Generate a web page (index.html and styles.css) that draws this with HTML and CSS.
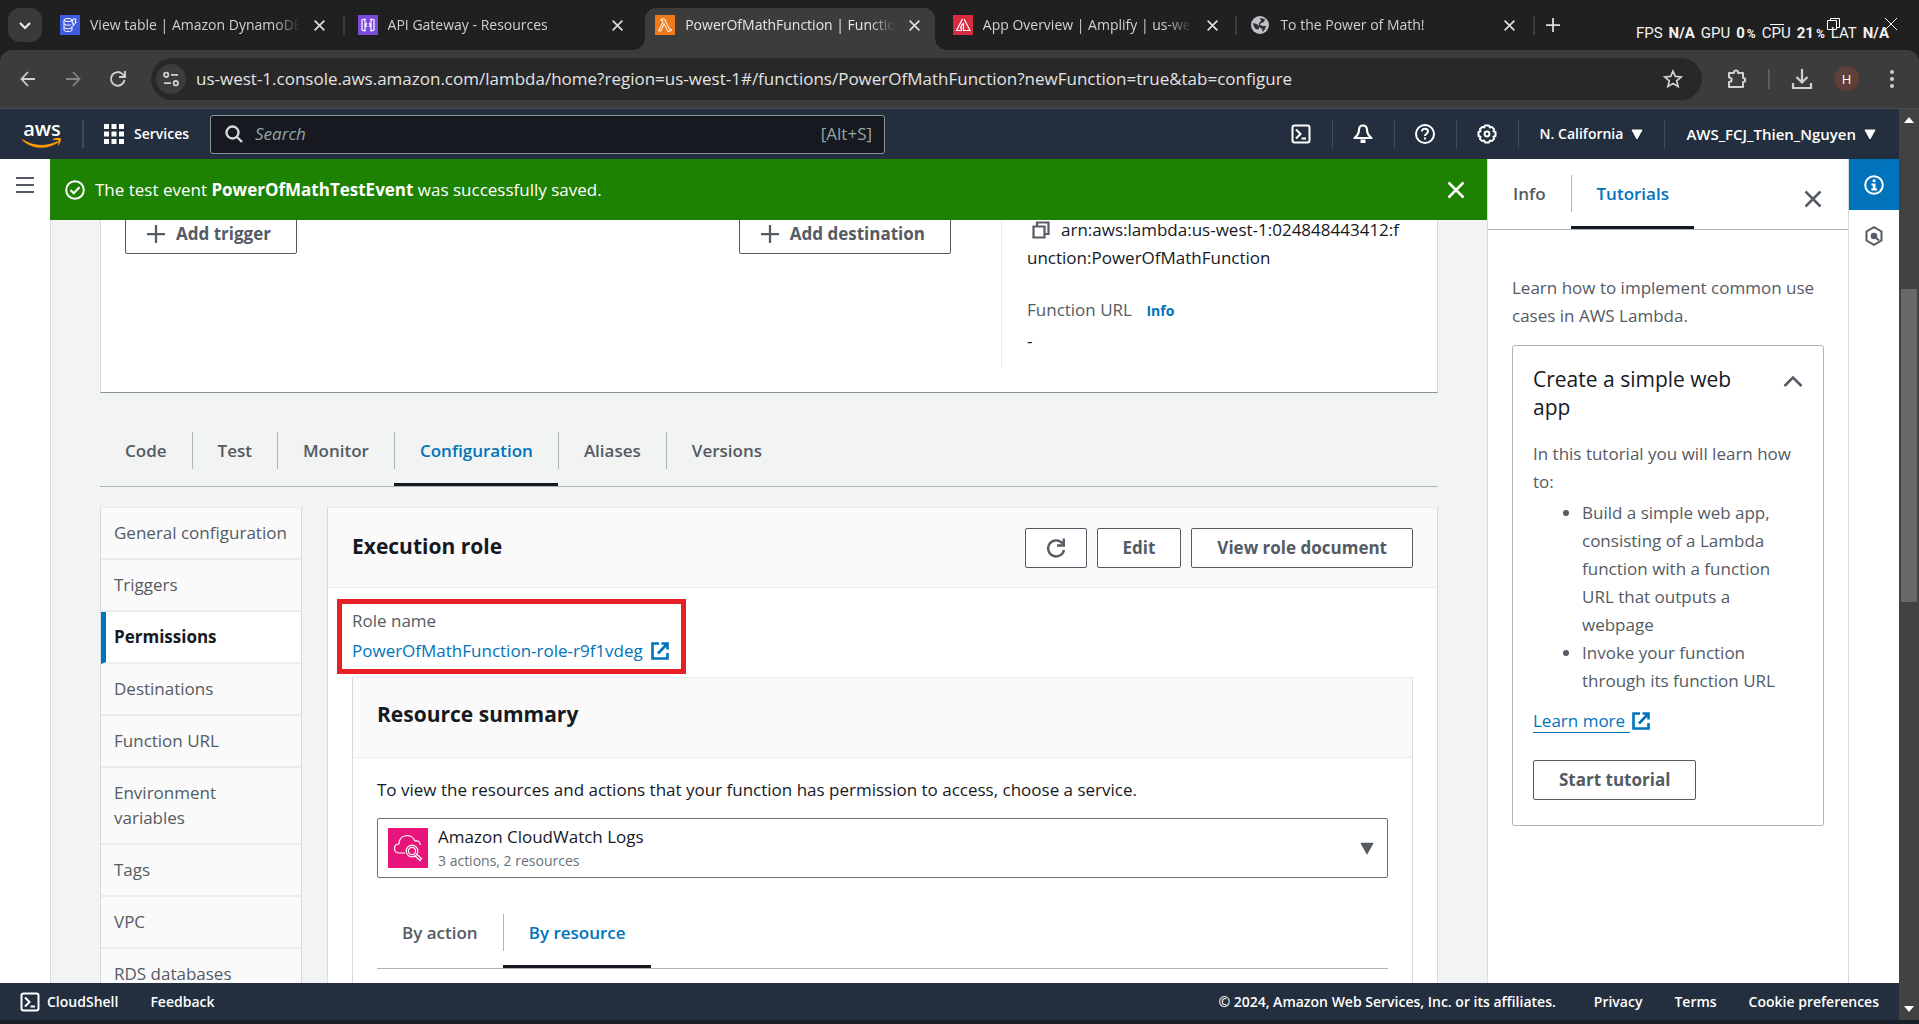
FILE: index.html
```html
<!DOCTYPE html>
<html lang="en">
<head>
<meta charset="utf-8">
<title>PowerOfMathFunction | Functions | Lambda</title>
<link rel="stylesheet" href="styles.css">
</head>
<body>
<svg class="sprite" aria-hidden="true">
  <symbol id="x" viewBox="0 0 16 16"><path d="M2 2l12 12M14 2L2 14" fill="none" stroke="currentColor" stroke-width="2"/></symbol>
  <symbol id="plus" viewBox="0 0 16 16"><path d="M8 0v16M0 8h16" fill="none" stroke="currentColor" stroke-width="2"/></symbol>
  <symbol id="caret" viewBox="0 0 12 12"><path d="M1 2h10L6 11z" fill="currentColor" stroke="currentColor" stroke-linejoin="round"/></symbol>
  <symbol id="shell" viewBox="0 0 20 20"><rect x="1.500" y="1.500" width="17" height="17" rx="2" fill="none" stroke="currentColor" stroke-width="2"/><path d="M5 5.500l4.500 4.500L5 14.500M10.500 14.500H15" fill="none" stroke="currentColor" stroke-width="2"/></symbol>
  <symbol id="external" viewBox="0 0 18 18"><path d="M8 1.500H1.500v15h15V11M10.500 1.500h6v6M16 2L7 11.500" fill="none" stroke="currentColor" stroke-width="2.600"/></symbol>
</svg>

<header class="tabstrip">
  <button class="tab-search" aria-label="Search tabs"><svg width="12" height="12" viewBox="0 0 12 12"><path d="M1 4l5 5 5-5" fill="none" stroke="currentColor" stroke-width="2.200"/></svg></button>
  <div class="btabs">
    <div class="btab">
      <svg width="20" height="20" viewBox="0 0 20 20"><rect width="20" height="20" fill="#3f5be0"/><g fill="none" stroke="#fff"><ellipse cx="8" cy="5" rx="4" ry="1.500"/><path d="M4 5v10c0 2 8 2 8 0v-4M12 5v2M4 8.500c0 2 6 2 7 1M4 12c0 2 6 2 8 1M13 4h3l-1 3h1.500L13 11l.5-3H12z"/></g></svg>
      <span class="btab-title">View table | Amazon DynamoDB</span>
      <button aria-label="Close tab"><svg width="13" height="13"><use href="#x"/></svg></button>
    </div>
    <div class="btab">
      <svg width="20" height="20" viewBox="0 0 20 20"><rect width="20" height="20" fill="#7c4bdb"/><path d="M7 4L4 5v10l3 1zM13 4l3 1v10l-3 1zM9 8l-1.500 2L9 12M11 8l1.500 2-1.500 2" fill="none" stroke="#fff" stroke-width="1.200"/></svg>
      <span class="btab-title">API Gateway - Resources</span>
      <button aria-label="Close tab"><svg width="13" height="13"><use href="#x"/></svg></button>
    </div>
    <div class="btab active">
      <svg width="20" height="20" viewBox="0 0 20 20"><rect width="20" height="20" fill="#ee7a1a"/><path d="M6 4h3.500l5 10.500 1.500-.5.500 1.500-3.500 1.200L9 8.500 6 16H3.500L8 7l-.700-1.500H6z" fill="none" stroke="#fff"/></svg>
      <span class="btab-title">PowerOfMathFunction | Functions</span>
      <button aria-label="Close tab"><svg width="13" height="13"><use href="#x"/></svg></button>
    </div>
    <div class="btab">
      <svg width="20" height="20" viewBox="0 0 20 20"><rect width="20" height="20" fill="#d92b3f"/><path d="M9.500 4L3.500 15.500h5V13H7.500l2-4.500M11 4l6 11.500H10.500V8" fill="none" stroke="#fff" stroke-width="1.200"/></svg>
      <span class="btab-title">App Overview | Amplify | us-west-1</span>
      <button aria-label="Close tab"><svg width="13" height="13"><use href="#x"/></svg></button>
    </div>
    <div class="btab">
      <svg width="20" height="20" viewBox="0 0 20 20"><circle cx="10" cy="10" r="9" fill="#bdc1c6"/><path d="M3 8l4 1 2 2v3l-2 .5C5 14 3 11 3 8zM10 3l5 1-1 3-3 1-1 2 3 1h3l-1 3-2 3-1-3-3-2V8l2-2z" fill="#303134"/></svg>
      <span class="btab-title">To the Power of Math!</span>
      <button aria-label="Close tab"><svg width="13" height="13"><use href="#x"/></svg></button>
    </div>
  </div>
  <button class="new-tab" aria-label="New tab"><svg width="14" height="14"><use href="#plus"/></svg></button>
  <div class="win">
    <button aria-label="Minimize"><svg width="14" height="14" viewBox="0 0 14 14"><path d="M0 7.500h14" stroke="currentColor"/></svg></button>
    <button aria-label="Restore"><svg width="14" height="14" viewBox="0 0 14 14"><path d="M.5 3.500h9v9h-9zM3.500 3V1.500h9v9H10" fill="none" stroke="currentColor"/></svg></button>
    <button aria-label="Close"><svg width="14" height="14" viewBox="0 0 14 14"><path d="M1 1l12 12M13 1L1 13" stroke="currentColor"/></svg></button>
  </div>
  <p class="stats"><span>FPS</span><b>N/A</b><span>GPU</span><b>0<small>%</small></b><span>CPU</span><b>21<small>%</small></b><span>LAT</span><b>N/A</b></p>
</header>

<div class="toolbar">
  <button aria-label="Back"><svg width="16" height="16" viewBox="0 0 16 16"><path d="M15 8H2M8 1L1.500 8 8 15" fill="none" stroke="currentColor" stroke-width="1.800"/></svg></button>
  <button class="dim" aria-label="Forward"><svg width="16" height="16" viewBox="0 0 16 16"><path d="M1 8h13M8 1l6.500 7L8 15" fill="none" stroke="currentColor" stroke-width="1.800"/></svg></button>
  <button aria-label="Reload"><svg width="18" height="18" viewBox="0 0 18 18"><path d="M15.500 10A6.800 6.800 0 1 1 14 4.500L15 6M16 1v6h-6" fill="none" stroke="currentColor" stroke-width="1.900"/></svg></button>
  <div class="omnibox">
    <button class="site" aria-label="Site information"><svg width="16" height="16" viewBox="0 0 16 16"><g fill="none" stroke="currentColor" stroke-width="1.800"><circle cx="3.200" cy="3.800" r="2.200"/><path d="M8 3.800h7M1 12.200h7"/><circle cx="12.800" cy="12.200" r="2.200"/></g></svg></button>
    <input aria-label="Address" value="us-west-1.console.aws.amazon.com/lambda/home?region=us-west-1#/functions/PowerOfMathFunction?newFunction=true&amp;tab=configure">
    <button class="star" aria-label="Bookmark"><svg width="20" height="20" viewBox="0 0 20 20"><path d="M10 2l2.300 5.400 5.900.5-4.500 3.900 1.400 5.700L10 14.400l-5.100 3.100 1.400-5.700L1.800 7.900l5.900-.5z" fill="none" stroke="currentColor" stroke-width="1.700"/></svg></button>
  </div>
  <div class="tools">
    <button aria-label="Extensions"><svg width="22" height="22" viewBox="0 0 22 22"><path d="M3 5h5c-.5-3.500 4.500-3.500 4 0h5v5c3 0 3 4 0 4v5H3v-5c3.500 0 3.500-4.500 0-4.500z" fill="none" stroke="currentColor" stroke-width="2" stroke-linejoin="round"/></svg></button>
    <i></i>
    <button aria-label="Downloads"><svg width="22" height="22" viewBox="0 0 22 22"><path d="M11 1v13M5.500 9l5.500 5.500L16.500 9M2 15v5h18v-5" fill="none" stroke="currentColor" stroke-width="2.200"/></svg></button>
    <button class="avatar" aria-label="Profile">H</button>
    <button aria-label="Menu"><svg width="6" height="20" viewBox="0 0 6 20"><g fill="currentColor"><circle cx="3" cy="3" r="2"/><circle cx="3" cy="10" r="2"/><circle cx="3" cy="17" r="2"/></g></svg></button>
  </div>
</div>

<div class="viewport">
  <div class="console">
    <nav class="awsnav">
      <a class="logo" href="#" aria-label="AWS home"><span>aws</span><svg width="40" height="12" viewBox="0 0 40 12"><path d="M0 1c11 7 23 8 36 2l1 1C26 12 10 12 0 2z" fill="#f90"/><path d="M31 1c4-1.500 8-1.500 8 0s-1 5-3 7c0-2 1-4 .5-5.500-1-.8-3.500-.5-5.500-.5z" fill="#f90"/></svg></a>
      <a class="services" href="#"><svg width="20" height="20" viewBox="0 0 20 20" fill="currentColor"><path d="M0 0h5v5H0zM7.500 0h5v5h-5zM15 0h5v5h-5zM0 7.500h5v5H0zM7.500 7.500h5v5h-5zM15 7.500h5v5h-5zM0 15h5v5H0zM7.500 15h5v5h-5zM15 15h5v5h-5z"/></svg>Services</a>
      <label class="search"><svg width="18" height="18" viewBox="0 0 18 18"><g fill="none" stroke="currentColor" stroke-width="2.400"><circle cx="7.500" cy="7.500" r="6"/><path d="M12 12l5 5"/></g></svg><input type="search" placeholder="Search" aria-label="Search"><span>[Alt+S]</span></label>
      <div class="navicons">
        <button aria-label="CloudShell"><svg width="20" height="20"><use href="#shell"/></svg></button>
        <button aria-label="Notifications"><svg width="20" height="20" viewBox="0 0 20 20"><path d="M10 1.500c-2.500 0-4 2-4 4.500 0 3.500-1.500 5.500-4.500 8h17c-3-2.500-4.500-4.500-4.500-8 0-2.500-1.500-4.500-4-4.500z" fill="none" stroke="currentColor" stroke-width="2.200" stroke-linejoin="round"/><path d="M7.500 15.500v3.500h5v-3.500" fill="currentColor"/></svg></button>
        <button aria-label="Help"><svg width="20" height="20" viewBox="0 0 20 20"><g fill="none" stroke="currentColor" stroke-width="2"><circle cx="10" cy="10" r="9"/><path d="M7 7.500c0-4 6-3.500 6 0 0 2-3 2.500-3 4.500M10 13.500v2"/></g></svg></button>
        <button aria-label="Settings"><svg width="20" height="20" viewBox="0 0 20 20"><path d="M8 1.500h4l.8 2 2-.6 2.300 2.300-.6 2 2 .8v4l-2 .8.6 2-2.300 2.300-2-.6-.8 2H8l-.8-2-2 .6-2.300-2.300.6-2-2-.8V8l2-.8-.6-2 2.300-2.300 2 .6z" fill="none" stroke="currentColor" stroke-width="2" stroke-linejoin="round"/><circle cx="10" cy="10" r="2.400" fill="none" stroke="currentColor" stroke-width="2"/></svg></button>
        <button class="menu">N. California <svg width="12" height="12"><use href="#caret"/></svg></button>
        <button class="menu account">AWS_FCJ_Thien_Nguyen <svg width="12" height="12"><use href="#caret"/></svg></button>
      </div>
    </nav>

    <div class="workspace">
      <aside class="rail"><button aria-label="Open navigation"><svg width="18" height="16" viewBox="0 0 18 16"><path d="M0 1h18M0 8h18M0 15h18" stroke="currentColor" stroke-width="2"/></svg></button></aside>

      <main class="main">
        <div class="flash" role="status">
          <svg width="20" height="20" viewBox="0 0 20 20"><g fill="none" stroke="currentColor" stroke-width="2"><circle cx="10" cy="10" r="8.800"/><path d="M5.500 10l3.200 3.200 5.800-6"/></g></svg>
          <p>The test event <b>PowerOfMathTestEvent</b> was successfully saved.</p>
          <button aria-label="Dismiss"><svg width="20" height="20"><use href="#x"/></svg></button>
        </div>

        <div class="scroller">
          <section class="card overview">
            <div class="designer">
              <button class="btn"><svg width="18" height="18"><use href="#plus"/></svg>Add trigger</button>
              <button class="btn"><svg width="18" height="18"><use href="#plus"/></svg>Add destination</button>
            </div>
            <dl class="facts">
              <dd class="arn"><svg width="18" height="18" viewBox="0 0 18 18"><path d="M1.500 5.500h11v11h-11zM5 5V1.500h11.500V13H13" fill="none" stroke="#545b64" stroke-width="2.200"/></svg>arn:aws:lambda:us-west-1:024848443412:f<wbr>unction:PowerOfMathFunction</dd>
              <dt>Function URL <a href="#">Info</a></dt>
              <dd>-</dd>
            </dl>
          </section>

          <div class="tabs" role="tablist">
            <button role="tab"><span>Code</span></button><button role="tab"><span>Test</span></button><button role="tab"><span>Monitor</span></button><button role="tab" aria-selected="true"><span>Configuration</span></button><button role="tab"><span>Aliases</span></button><button role="tab"><span>Versions</span></button>
          </div>

          <div class="config">
            <nav class="sidebar">
              <a href="#">General configuration</a>
              <a href="#">Triggers</a>
              <a href="#" class="current">Permissions</a>
              <a href="#">Destinations</a>
              <a href="#">Function URL</a>
              <a href="#">Environment<br>variables</a>
              <a href="#">Tags</a>
              <a href="#">VPC</a>
              <a href="#">RDS databases</a>
            </nav>
            <section class="card role">
              <header>
                <h2>Execution role</h2>
                <button class="btn icon" aria-label="Refresh"><svg width="20" height="20" viewBox="0 0 20 20"><path d="M18 12A8 8 0 1 1 16.500 5.500M17.800 .5v7H11" fill="none" stroke="currentColor" stroke-width="2.400"/></svg></button>
                <button class="btn">Edit</button>
                <button class="btn">View role document</button>
              </header>
              <div class="role-body">
                <div class="field">
                  <div>Role name</div>
                  <a href="#">PowerOfMathFunction-role-r9f1vdeg <svg width="18" height="18"><use href="#external"/></svg></a>
                </div>
                <section class="summary">
                  <header><h2>Resource summary</h2></header>
                  <div class="summary-body">
                    <label for="service">To view the resources and actions that your function has permission to access, choose a service.</label>
                    <div class="picker">
                      <svg width="40" height="40" viewBox="0 0 40 40"><rect width="40" height="40" fill="#e7157b"/><g fill="none" stroke="#fff" stroke-width="1.200"><path d="M17 25h-6c-6 0-6-9 0-9 0-10 13-11 16-3 4-1 5.500 2 5 4"/><circle cx="24" cy="23" r="5.800"/><circle cx="24" cy="23" r="3.600"/><path d="M28.500 26l5 4.500-1.500 2-5.500-5"/></g></svg>
                      <div class="picker-text">
                        <select id="service"><option>Amazon CloudWatch Logs</option></select>
                        <small>3 actions, 2 resources</small>
                      </div>
                      <svg class="picker-caret" width="14" height="14"><use href="#caret"/></svg>
                    </div>
                    <div class="tabs" role="tablist"><button role="tab"><span>By action</span></button><button role="tab" aria-selected="true"><span>By resource</span></button></div>
                  </div>
                </section>
              </div>
            </section>
          </div>
        </div>
      </main>

      <aside class="help">
        <div class="help-head">
          <div class="tabs" role="tablist"><button role="tab"><span>Info</span></button><button role="tab" aria-selected="true"><span>Tutorials</span></button></div>
          <button class="help-close" aria-label="Close panel"><svg width="20" height="20"><use href="#x"/></svg></button>
        </div>
        <div class="help-body">
          <p>Learn how to implement common use cases in AWS Lambda.</p>
          <section class="tutorial">
            <header><h3>Create a simple web app</h3><button aria-label="Collapse"><svg width="20" height="12" viewBox="0 0 20 12"><path d="M1.500 11L10 2.500l8.500 8.500" fill="none" stroke="currentColor" stroke-width="2.500"/></svg></button></header>
            <p>In this tutorial you will learn how to:</p>
            <ul>
              <li>Build a simple web app, consisting of a Lambda function with a function URL that outputs a webpage</li>
              <li>Invoke your function through its function URL</li>
            </ul>
            <a class="learn" href="#"><span>Learn more </span><svg width="18" height="18"><use href="#external"/></svg></a>
            <button class="btn">Start tutorial</button>
          </section>
        </div>
      </aside>

      <aside class="toolrail">
        <button class="on" aria-label="Info"><svg width="20" height="20" viewBox="0 0 20 20"><circle cx="10" cy="10" r="8.800" fill="none" stroke="currentColor" stroke-width="2"/><path d="M8.700 4.500h2.800V7H8.700zM7.500 8.500h4v5h1.500v2H7.300v-2h1.500v-3H7.500z" fill="currentColor"/></svg></button>
        <button aria-label="Resources"><svg width="20" height="20" viewBox="0 0 20 20"><path d="M10 1.200l7.500 4.300v9L10 18.800l-7.500-4.300v-9z" fill="none" stroke="currentColor" stroke-width="2"/><circle cx="10" cy="10" r="3.300" fill="currentColor"/><path d="M10 10l5 4.500" stroke="currentColor" stroke-width="2"/></svg></button>
      </aside>
    </div>

    <footer class="footer">
      <a href="#"><svg width="20" height="20"><use href="#shell"/></svg>CloudShell</a>
      <a href="#">Feedback</a>
      <p>© 2024, Amazon Web Services, Inc. or its affiliates.</p>
      <a href="#">Privacy</a>
      <a href="#">Terms</a>
      <a href="#">Cookie preferences</a>
    </footer>
  </div>
  <div class="scrollbar" aria-hidden="true">
    <svg width="10" height="6" viewBox="0 0 10 6"><path d="M5 0l5 6H0z" fill="#fff"/></svg>
    <div class="track"><div class="thumb"></div></div>
    <svg width="10" height="6" viewBox="0 0 10 6"><path d="M5 6l5-6H0z" fill="#fff"/></svg>
  </div>
</div>
</body>
</html>
```
FILE: styles.css
```css
* { box-sizing: border-box; }

body {
  margin: 0;
  height: 100vh;
  display: flex;
  flex-direction: column;
  overflow: hidden;
  background: #1b1f27;
  color: #16191f;
  font: 17px/28px "Open Sans", sans-serif;
}

button, input, select { font: inherit; color: inherit; }
button { padding: 0; border: 0; background: none; display: flex; align-items: center; justify-content: center; }
svg { flex: none; display: block; }
p, h2, h3, dl, dd, ul { margin: 0; }
h2 { font-size: 21px; font-weight: 700; line-height: 28px; }
a { color: #0073bb; text-decoration: none; }
.sprite { position: absolute; width: 0; height: 0; }

/* Browser tab strip */
.tabstrip {
  position: relative;
  display: flex;
  height: 50px;
  padding-top: 8px;
  background: #202020;
  color: #d0d0d0;
  font-size: 14px;
  line-height: 20px;
}
.tab-search { width: 34px; height: 34px; margin: 0 8px; border-radius: 12px; background: #3a3a3a; color: #eee; }
.btabs { display: flex; flex: 0 1 1488px; min-width: 0; }
.btab {
  position: relative;
  flex: 1;
  min-width: 0;
  display: flex;
  align-items: center;
  gap: 10px;
  margin-right: 8px;
  padding: 0 10px 8px;
}
.btab::after { content: ""; position: absolute; right: -5px; top: 8px; width: 2px; height: 19px; background: #3c3c3c; }
.btab.active { border-radius: 11px 11px 0 0; background: #3c3c3c; color: #e6e6e6; }
.btab:has(+ .active)::after { display: none; }
.btab.active::before,
.btab.active::after { content: ""; position: absolute; top: auto; bottom: 0; width: 12px; height: 12px; }
.btab.active::before { left: -12px; background: radial-gradient(circle at 0 0, transparent 12px, #3c3c3c 12px); }
.btab.active::after { right: -12px; background: radial-gradient(circle at 100% 0, transparent 12px, #3c3c3c 12px); }
.btab-title { flex: 1; overflow: hidden; white-space: nowrap; -webkit-mask-image: linear-gradient(90deg, #000 88%, transparent); mask-image: linear-gradient(90deg, #000 88%, transparent); }
.btab button { width: 20px; height: 20px; color: #e0e0e0; }
.new-tab { width: 30px; height: 34px; color: #ddd; }
.win { display: flex; margin-left: auto; color: #fff; }
.win button { width: 57px; height: 32px; }
.stats {
  position: absolute;
  right: 30px;
  top: 22px;
  display: flex;
  gap: 6px;
  font: 15px/22px Roboto, sans-serif;
  color: #f2f2f2;
}
.stats small { font-size: 12px; margin-left: 2px; }

/* Browser toolbar */
.toolbar {
  display: flex;
  align-items: center;
  height: 59px;
  padding: 0 24px 1px 5px;
  border-bottom: 1px solid #4c4c4c;
  background: #3c3c3c;
  color: #d0d0d0;
  border-radius: 12px 12px 0 0;
}
.toolbar > button { width: 45px; height: 40px; }
.toolbar .dim { color: #858585; }
.omnibox { flex: 1; display: flex; align-items: center; height: 42px; margin-left: 11px; padding: 0 19px 0 5px; border-radius: 21px; background: #282828; }
.site { width: 30px; height: 30px; border-radius: 50%; background: #3c3c3c; }
.omnibox input { flex: 1; min-width: 0; margin-left: 10px; padding: 0; border: 0; background: none; color: #e3e3e3; }
.tools { display: flex; align-items: center; padding-left: 24px; }
.tools i { width: 2px; height: 20px; margin: 0 21px 0 20px; background: #5c5c5c; }
.avatar { width: 25px; height: 25px; margin: 0 30px 0 21px; border-radius: 50%; background: #5e4038; color: #fff; font: 13px/20px "Open Sans", sans-serif; }

.viewport { flex: 1; min-height: 0; display: flex; margin-bottom: 4px; }
.console { flex: 1; min-width: 0; display: flex; flex-direction: column; }

/* AWS global navigation */
.awsnav { display: flex; align-items: center; height: 50px; background: #232f3e; color: #fff; font-size: 14px; line-height: 20px; }
.awsnav a { color: #fff; }
.logo { display: flex; flex-direction: column; align-items: center; margin-left: 22px; font-size: 20px; font-weight: 600; line-height: 20px; }
.logo svg { margin-top: -1px; }
.services { display: flex; align-items: center; gap: 10px; height: 28px; margin: 0 21px 0 20px; padding-left: 20px; border-left: 2px solid #414b59; font-weight: 600; }
.search { display: flex; align-items: center; flex: 0 1 675px; min-width: 0; height: 39px; padding: 0 12px 0 14px; border: 1px solid #879596; border-radius: 3px; background: #16191f; color: #d5dbdb; }
.search input { flex: 1; min-width: 0; margin-left: 12px; padding: 0; border: 0; background: none; font-size: 17px; outline: 0; }
.search input::placeholder { color: #95a5a6; font-style: italic; opacity: 1; }
.search span { color: #95a5a6; font-size: 17px; }
.navicons { display: flex; margin-left: auto; }
.navicons button { width: 62px; height: 28px; border-right: 1px solid #414b59; }
.navicons .menu { width: auto; gap: 8px; padding: 0 21px; font-weight: 600; }
.navicons .account { padding-right: 23px; border-right: 0; font-size: 15px; }

/* Workspace columns */
.workspace { flex: 1; min-height: 0; display: flex; background: #fff; }
.rail { width: 50px; padding-top: 18px; color: #545b64; }
.rail button { margin-left: 16px; }
.main { flex: 1; min-width: 0; display: flex; flex-direction: column; background: #f2f3f3; }
.flash { position: relative; display: flex; align-items: center; gap: 10px; height: 61px; padding: 0 21px 0 15px; background: #1d8102; color: #fff; }
.flash p { flex: 1; }
.scroller { flex: 1; min-height: 0; overflow: hidden; padding: 0 49px; border-left: 1px solid #d5dbdb; }
.card { border: 1px solid #d5dbdb; border-top-color: #eaeded; background: #fff; }

.btn { height: 40px; padding: 0 25px; gap: 11px; border: 1px solid #545b64; border-radius: 2px; background: #fff; color: #545b64; font-weight: 700; white-space: nowrap; }
.btn.icon { padding: 0 20px; }

.overview { display: flex; margin-top: -19px; padding: 0 24px 24px; border-bottom-color: #879596; }
.designer { flex: 1; display: flex; align-items: flex-start; justify-content: space-between; padding: 12px 50px 0 0; }
.designer .btn { padding: 0 25px 0 21px; }
.facts { width: 412px; padding: 14px 0 13px 25px; border-left: 1px solid #eaeded; }
.arn { margin-bottom: 24px; }
.arn svg { display: inline-block; margin: 0 11px 0 5px; vertical-align: -3px; }
.facts dt { margin-bottom: 2px; color: #545b64; }
.facts a { margin-left: 10px; font-size: 14px; font-weight: 700; }

.tabs { display: flex; border-bottom: 1px solid #aab7b8; }
.tabs button { height: 54px; padding-bottom: 17px; color: #545b64; font-weight: 600; }
.tabs button span { padding: 0 25px; line-height: 37px; }
.tabs button + button span { border-left: 1px solid #aab7b8; }
.tabs [aria-selected="true"] { color: #0073bb; box-shadow: inset 0 -3px #16191f; }
.scroller > .tabs { margin-top: 39px; }

.config { display: flex; align-items: flex-start; gap: 25px; margin-top: 20px; }
.sidebar { width: 202px; border: 1px solid #d5dbdb; border-top-color: #eaeded; background: #fafafa; line-height: 25px; }
.sidebar a { display: block; padding: 12px 8px 13px 13px; border-bottom: 2px solid #eaeded; color: #545b64; }
.sidebar .current { padding-left: 8px; border-left: 5px solid #0073bb; background: #fff; color: #16191f; font-weight: 700; }

.role { flex: 1; min-width: 0; }
.role > header { display: flex; align-items: center; gap: 10px; height: 80px; padding: 0 24px; border-bottom: 1px solid #eaeded; background: #fafafa; }
.role > header h2 { flex: 1; padding-bottom: 4px; }
.role-body { padding: 19px 24px 0; }
.field { position: relative; width: fit-content; margin-bottom: 12px; color: #545b64; }
.field::after { content: ""; position: absolute; inset: -8px -17px -9px -15px; border: 5px solid #e71f26; pointer-events: none; }
.field a { display: flex; align-items: center; gap: 8px; margin-top: 2px; }
.summary { border: 1px solid #d5dbdb; border-top-color: #eaeded; }
.summary > header { height: 80px; padding: 22px 24px 0; border-bottom: 1px solid #eaeded; background: #fafafa; }
.summary-body { padding: 18px 24px 100px; }
.picker { display: flex; align-items: center; height: 60px; margin: 14px 0 36px; padding: 0 13px 0 10px; border: 1px solid #687078; border-radius: 2px; }
.picker-text { flex: 1; margin-left: 10px; color: #687078; }
.picker select { display: block; width: 100%; height: 26px; padding: 0; border: 0; background: none; color: #16191f; line-height: 26px; appearance: none; }
.picker small { display: block; font-size: 14px; line-height: 22px; }
.picker-caret { color: #545b64; }

/* Help panel */
.help { width: 362px; border: solid #d5dbdb; border-width: 0 1px; color: #545b64; }
.help-head { position: relative; padding-top: 16px; }
.help-close { position: absolute; right: 25px; top: 30px; color: #545b64; }
.help-body { padding: 44px 24px 0; }
.tutorial { margin-top: 15px; padding: 19px 20px 25px; border: 1px solid #aab7b8; border-radius: 3px; }
.tutorial header { display: flex; align-items: flex-start; justify-content: space-between; margin-bottom: 19px; }
.tutorial h3 { width: 215px; color: #16191f; font-size: 21px; font-weight: 400; line-height: 28px; }
.tutorial header button { height: 32px; color: #545b64; }
.tutorial ul { padding-left: 49px; margin: 3px 0 13px; }
.learn { display: flex; align-items: center; gap: 2px; margin-bottom: 27px; }
.learn span { height: 25px; border-bottom: 1px solid #0073bb; line-height: 25px; white-space: pre; }

.toolrail { width: 50px; color: #545b64; }
.toolrail button { width: 50px; height: 51px; }
.toolrail .on { background: #0073bb; color: #fff; }

.footer { display: flex; align-items: center; gap: 32px; height: 37px; padding: 0 20px; background: #232f3e; color: #fff; font-size: 14px; font-weight: 600; line-height: 20px; }
.footer a { display: flex; align-items: center; gap: 7px; color: #fff; }
.footer p { margin-left: auto; margin-right: 6px; }

.scrollbar { width: 20px; display: flex; flex-direction: column; align-items: center; padding: 8px 0; background: #424242; }
.track { flex: 1; width: 16px; margin: 6px 0; padding-top: 160px; }
.thumb { height: 44%; border-radius: 1px; background: #686868; }
```
